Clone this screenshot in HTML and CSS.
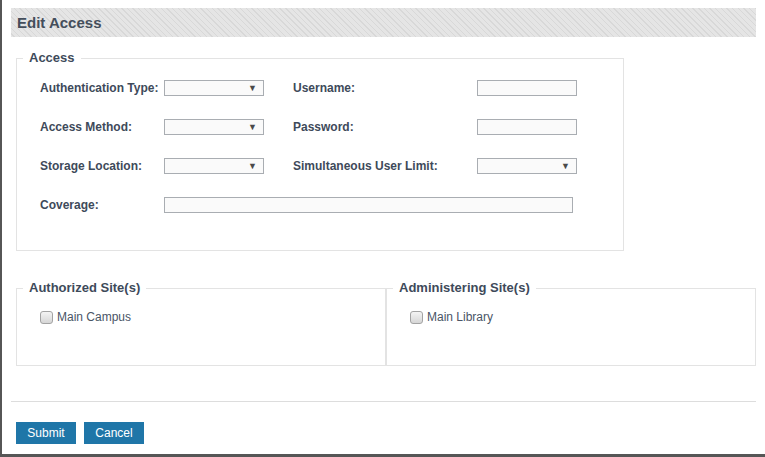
FILE: index.html
```html
<!DOCTYPE html>
<html lang="en">
<head>
    <meta charset="UTF-8">
    <meta name="viewport" content="width=device-width, initial-scale=1.0">
    <title>Edit Access</title>
    <link rel="stylesheet" href="styles.css">
</head>
<body>

<div class="page">
    <h2 class="panel-title">Edit Access</h2>

    <form id="accessForm">
        <fieldset class="access">
            <legend>Access</legend>
            <div class="access-grid">
                <label>Authentication Type:</label>
                <span class="select-wrap"><select name="auth_type"></select></span>
                <label>Username:</label>
                <input type="text" name="username">

                <label>Access Method:</label>
                <span class="select-wrap"><select name="access_method"></select></span>
                <label>Password:</label>
                <input type="text" name="password">

                <label>Storage Location:</label>
                <span class="select-wrap"><select name="storage_location"></select></span>
                <label>Simultaneous User Limit:</label>
                <span class="select-wrap"><select name="user_limit"></select></span>

                <label>Coverage:</label>
                <input type="text" name="coverage" class="coverage">
            </div>
        </fieldset>

        <div class="sites">
            <fieldset class="site-box">
                <legend>Authorized Site(s)</legend>
                <label class="check"><input type="checkbox" name="authorized" value="main_campus"> Main Campus</label>
            </fieldset>
            <fieldset class="site-box">
                <legend>Administering Site(s)</legend>
                <label class="check"><input type="checkbox" name="administering" value="main_library"> Main Library</label>
            </fieldset>
        </div>

        <hr>

        <div class="actions">
            <button type="button">Submit</button>
            <button type="button">Cancel</button>
        </div>
    </form>
</div>

</body>
</html>
```

FILE: styles.css
```css
html, body {
    margin: 0;
    padding: 0;
    background: #fff;
}
body {
    font-family: "Liberation Sans", Arial, sans-serif;
    font-size: 12px;
    color: #3e4a5a;
}
.page {
    box-sizing: border-box;
    height: 457px;
    padding: 8px 9px 0 9px;
    border-left: 2px solid #565656;
    border-bottom: 3px solid #565656;
}
.panel-title {
    margin: 0;
    height: 29px;
    line-height: 29px;
    padding-left: 6px;
    font-size: 15px;
    font-weight: bold;
    color: #444e5b;
    background: repeating-linear-gradient(45deg, #e5e5e5 0, #e5e5e5 2px, #d8d8d8 2px, #d8d8d8 3px, #e5e5e5 3px, #e5e5e5 4px);
}
fieldset {
    margin: 0;
    padding: 0;
    border: 1px solid #e3e3e3;
    min-width: 0;
}
legend {
    padding: 0 6px;
    margin-left: -17px;
    font-size: 13px;
    font-weight: bold;
    line-height: 16px;
    color: #3e4a5a;
}
.access {
    width: 608px;
    box-sizing: border-box;
    margin: 13px 0 0 5px;
    padding: 2px 0 26px 23px;
}
.access-grid {
    display: grid;
    grid-template-columns: 124px 129px 184px 100px;
    grid-auto-rows: 39px;
    align-items: center;
}
.access-grid label {
    font-weight: bold;
}
input[type="text"], select {
    box-sizing: border-box;
    width: 100px;
    height: 16px;
    margin: 0;
    padding: 0 3px;
    border: 1px solid #a9adb2;
    background: #fafafa;
    font-family: inherit;
    font-size: 11px;
    border-radius: 0;
    outline: none;
}
select {
    appearance: none;
    -webkit-appearance: none;
}
.select-wrap {
    position: relative;
    display: block;
    width: 100px;
    height: 16px;
}
.select-wrap::after {
    content: "\25BC";
    position: absolute;
    right: 7px;
    top: 4px;
    font-size: 9px;
    line-height: 9px;
    color: #4a4a4a;
    pointer-events: none;
}
.coverage {
    grid-column: 2 / 5;
    width: 409px !important;
}
.sites {
    display: flex;
    margin: 29px 0 0 5px;
}
.site-box {
    flex: 1;
    box-sizing: border-box;
    height: 86px;
    padding: 14px 0 0 23px;
}
.check {
    display: flex;
    align-items: center;
    gap: 4px;
    color: #4a5566;
}
input[type="checkbox"] {
    appearance: none;
    -webkit-appearance: none;
    width: 13px;
    height: 13px;
    margin: 0;
    border: 1px solid #a3a3a3;
    border-radius: 3px;
    background: linear-gradient(#f4f4f4, #d6d6d6);
}
hr {
    margin: 35px 0 0 0;
    border: none;
    border-top: 1px solid #dddddd;
}
.actions {
    display: flex;
    gap: 8px;
    margin: 20px 0 0 5px;
}
button {
    width: 60px;
    height: 22px;
    padding: 0;
    border: none;
    background-color: #1f76a8;
    color: #fff;
    font-family: inherit;
    font-size: 12px;
    cursor: pointer;
}
button:hover {
    background-color: #1a6590;
}
```
